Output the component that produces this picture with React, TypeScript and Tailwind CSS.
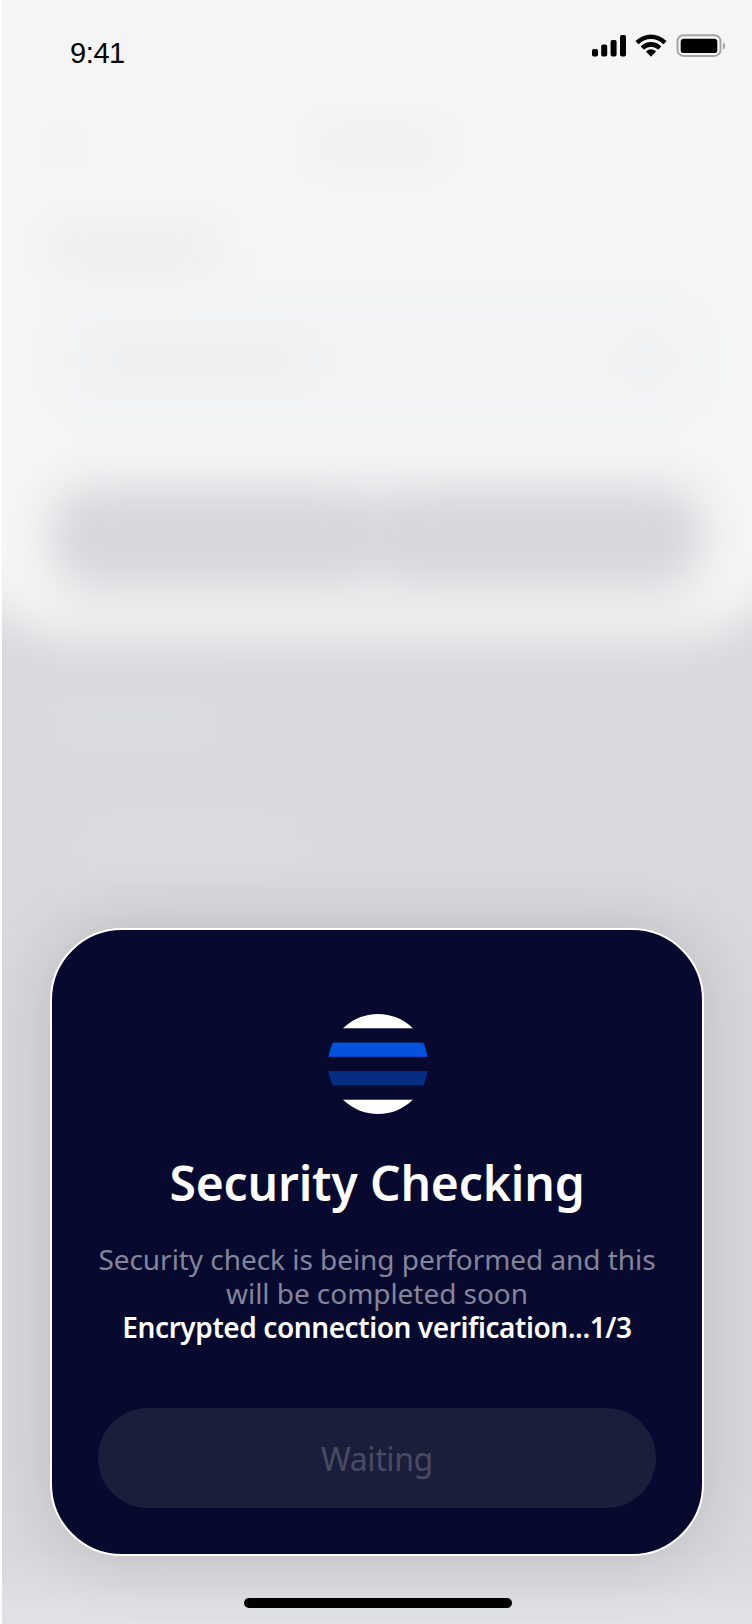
function StatusBar() {
  return (
    <header className="flex h-[80px] items-start justify-between pl-[68px] pr-[26px]">
      <time className="mt-[37px] font-['Liberation_Sans',sans-serif] text-[29px] leading-[33px] tracking-[-0.4px] text-black">
        9:41
      </time>
      <div className="mt-[34px] flex items-start">
        <svg width="34" height="23" viewBox="0 0 34 23" className="mr-[9px]" aria-hidden="true">
          <rect x="0" y="15" width="6" height="7.6" rx="1.8" />
          <rect x="9.2" y="10.6" width="6" height="12" rx="1.8" />
          <rect x="18.6" y="6" width="6" height="16.6" rx="1.8" />
          <rect x="28" y="1" width="6" height="21.6" rx="1.8" />
        </svg>
        <svg width="32" height="23" viewBox="0 0 17 12" className="mr-[9px]" aria-hidden="true">
          <path d="M8.5 2.6c2.37 0 4.65.91 6.36 2.54.13.13.34.12.46 0l1.24-1.24a.33.33 0 0 0 0-.48 11.7 11.7 0 0 0-16.12 0 .33.33 0 0 0 0 .48l1.23 1.24c.13.12.34.13.47 0A9.22 9.22 0 0 1 8.5 2.6Z" />
          <path d="M8.5 6.67c1.3 0 2.56.48 3.52 1.36.13.12.34.12.47-.01l1.23-1.25a.34.34 0 0 0 0-.49 7.59 7.59 0 0 0-10.43 0 .34.34 0 0 0 0 .49l1.23 1.25c.13.13.34.13.47.01A5.22 5.22 0 0 1 8.5 6.67Z" />
          <path d="M10.97 9.4c.13-.13.13-.35-.02-.47a3.8 3.8 0 0 0-4.9 0c-.14.12-.15.34-.02.47l2.23 2.3c.13.13.34.13.47 0l2.24-2.3Z" />
        </svg>
        <svg width="50" height="23" viewBox="0 0 50 23" aria-hidden="true">
          <rect x="1.5" y="1.3" width="43" height="20.6" rx="6" fill="none" stroke="#a5a5a5" strokeWidth="2" />
          <rect x="4.7" y="4.7" width="36.6" height="14.4" rx="3.2" />
          <path d="M47 8.2v7.4c1.3-.6 2.2-2 2.2-3.7s-.9-3.1-2.2-3.7Z" fill="#a5a5a5" />
        </svg>
      </div>
    </header>
  );
}

function Backdrop() {
  return (
    <div className="absolute inset-0 overflow-hidden bg-[#d8d8dd]" aria-hidden="true">
      <div className="-mx-[60px] -mt-[100px] flex h-[1860px] flex-col bg-[#d8d8dd] px-[60px] pt-[100px] blur-[22px]">
        <div className="-mx-[60px] -mt-[100px] flex h-[744px] shrink-0 flex-col rounded-b-[150px] bg-[#f5f5f5] px-[108px] pt-[100px]">
          <div className="mt-[132px] flex h-[28px] items-center justify-between">
            <div className="size-[28px] rounded-full bg-[#f0f0f0]" />
            <div className="h-[26px] w-[130px] bg-[#ededed]" />
            <div className="size-[28px]" />
          </div>
          <div className="mt-[74px] h-[28px] w-[166px] bg-[#e9e9ea]" />
          <div className="mt-[32px] flex h-[132px] items-center justify-between rounded-[40px] bg-[#f2f3f4] px-[40px]">
            <div className="h-[32px] w-[220px] bg-[#eeeeef]" />
            <div className="size-[40px] rounded-full bg-[#f0f0f1]" />
          </div>
          <div className="mt-[60px] flex h-[100px] gap-[2px] rounded-[44px] bg-[#e1e0e5]">
            <div className="flex-1 rounded-[44px] bg-[#d7d6dc]" />
            <div className="flex-1 rounded-[44px] bg-[#d7d6dc]" />
          </div>
          <div className="h-[57px] bg-[#efeff0]" />
        </div>
        <div className="ml-[48px] mt-[65px] h-[28px] w-[170px] shrink-0 bg-[#dfe0e4]" />
        <div className="mx-[48px] mt-[48px] h-[132px] shrink-0 rounded-[40px] bg-[#dadade] px-[40px] pt-[44px]">
          <div className="h-[32px] w-[200px] bg-[#dedee2]" />
        </div>
        <div className="-mx-[60px] mt-[670px] h-[230px] shrink-0 bg-[#e1e2e5]" />
      </div>
    </div>
  );
}

function Logo() {
  return (
    <svg width="100" height="100" viewBox="0 0 100 100" aria-hidden="true">
      <clipPath id="disc">
        <circle cx="50" cy="50" r="50" />
      </clipPath>
      <g clipPath="url(#disc)">
        <rect width="100" height="14.29" fill="#fff" />
        <rect y="28.57" width="100" height="14.29" fill="#0552dc" />
        <rect y="57.14" width="100" height="14.29" fill="#052d82" />
        <rect y="85.71" width="100" height="14.29" fill="#fff" />
      </g>
    </svg>
  );
}

function SecurityCard() {
  return (
    <section className="mx-[48px] mt-[848px] flex h-[628px] shrink-0 flex-col items-center rounded-[72px] border-2 border-white bg-[#07092f] px-[44px] pt-[84px] shadow-[0_0_70px_rgba(0,0,0,0.14)]">
      <div className="ml-[2px]">
        <Logo />
      </div>
      <h1 className="mt-[35px] whitespace-nowrap text-[48px] font-semibold leading-[68px] tracking-[-0.15px] text-white">
        Security Checking
      </h1>
      <p className="mt-[25px] whitespace-nowrap text-center text-[28px] leading-[34px] tracking-[-0.05px] text-[#84859a]">
        Security check is being performed and this
        <br />
        will be completed soon
      </p>
      <p className="whitespace-nowrap text-[28px] font-semibold leading-[34px] tracking-[-0.42px] text-white">
        Encrypted connection verification...1/3
      </p>
      <button
        disabled
        className="mt-[64px] h-[100px] w-[558px] shrink-0 rounded-full bg-[#1b1e3b] pt-[2px] text-[32px] leading-[44px] tracking-[-0.4px] text-[#494b63]"
      >
        Waiting
      </button>
    </section>
  );
}

export default function App() {
  return (
    <div className="h-[1624px] w-[752px] overflow-hidden bg-white pl-[2px] font-['Noto_Sans',sans-serif]">
      <main className="relative h-full w-[750px]">
        <Backdrop />
        <div className="relative flex h-full flex-col">
          <StatusBar />
          <SecurityCard />
          <div className="ml-[242px] mt-[42px] h-[10px] w-[268px] shrink-0 rounded-full bg-black" />
        </div>
      </main>
    </div>
  );
}
